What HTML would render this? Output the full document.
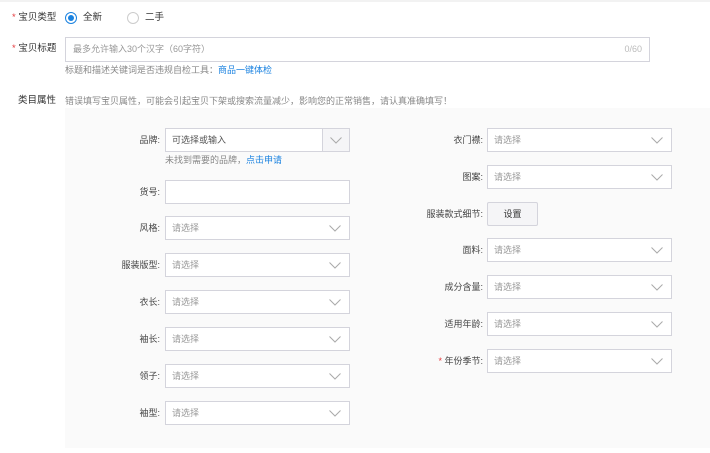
<!DOCTYPE html>
<html><head><meta charset="utf-8"><style>
*{margin:0;padding:0;box-sizing:border-box}
body{width:710px;height:453px;background:#fff;position:relative;overflow:hidden;font-family:"Liberation Sans","Noto Sans CJK SC",sans-serif;font-size:9px;color:#333}
.a{position:absolute;white-space:nowrap}
.lab{position:absolute;white-space:nowrap;text-align:right;font-size:9px;color:#444;line-height:24px}
.box{position:absolute;height:24px;border:1px solid #d4d4dc;background:#fff;color:#999;font-size:9px;line-height:22px;padding-left:6px}
.box svg{position:absolute;right:8px;top:8px}
.red{color:#e4393c}
</style></head><body>
<div class="a" style="left:0;top:0;width:710px;height:2px;background:#f2f2f2"></div>
<div class="a" style="left:12px;top:11px;font-size:9.5px;line-height:14px"><span class="red">* </span>宝贝类型</div>
<div class="a" style="left:65px;top:12px;width:12px;height:12px;border:1px solid #1a82e0;border-radius:50%;background:#fff"><div style="position:absolute;left:2px;top:2px;width:6px;height:6px;border-radius:50%;background:#1a82e0"></div></div>
<div class="a" style="left:83px;top:11px;line-height:14px;font-size:9.5px">全新</div>
<div class="a" style="left:127px;top:12px;width:12px;height:12px;border:1px solid #ccc;border-radius:50%"></div>
<div class="a" style="left:145px;top:11px;line-height:14px;font-size:9.5px">二手</div>
<div class="a" style="left:12px;top:42px;font-size:9.5px;line-height:14px"><span class="red">* </span>宝贝标题</div>
<div class="box" style="left:65px;top:37px;width:585px;height:25px;color:#999;line-height:23px;padding-left:7px">最多允许输入30个汉字（60字符）<span style="position:absolute;right:7px;color:#bbb">0/60</span></div>
<div class="a" style="left:65px;top:64px;color:#888;line-height:12px">标题和描述关键词是否违规自检工具：<span style="color:#1a82e0">商品一键体检</span></div>
<div class="a" style="left:18px;top:94px;font-size:9.5px;line-height:14px">类目属性</div>
<div class="a" style="left:65px;top:95px;color:#888;line-height:12px">错误填写宝贝属性，可能会引起宝贝下架或搜索流量减少，影响您的正常销售，请认真准确填写！</div>
<div class="a" style="left:65px;top:108px;width:645px;height:340px;background:#fafafa"></div>

<div class="lab" style="right:550px;top:128px">品牌:</div>
<div class="box" style="left:165px;top:128px;width:185px;color:#555">可选择或输入<div style="position:absolute;right:0;top:0;width:27px;height:22px;border-left:1px solid #d4d4dc;background:#f5f5f7"><svg width="12" height="7" style="position:absolute;left:7px;top:8px"><path d="M0.5 0.5L6 6L11.5 0.5" fill="none" stroke="#aaa"/></svg></div></div>
<div class="a" style="left:165px;top:154px;color:#888;line-height:12px">未找到需要的品牌，<span style="color:#1a82e0">点击申请</span></div>
<div class="lab" style="right:550px;top:180px">货号:</div>
<div class="box" style="left:165px;top:180px;width:185px"></div>

<div class="lab" style="right:550px;top:216px">风格:</div>
<div class="box" style="left:165px;top:216px;width:185px">请选择<svg width="12" height="7"><path d="M0.5 0.5L6 6L11.5 0.5" fill="none" stroke="#aaa"/></svg></div>
<div class="lab" style="right:550px;top:253px">服装版型:</div>
<div class="box" style="left:165px;top:253px;width:185px">请选择<svg width="12" height="7"><path d="M0.5 0.5L6 6L11.5 0.5" fill="none" stroke="#aaa"/></svg></div>
<div class="lab" style="right:550px;top:290px">衣长:</div>
<div class="box" style="left:165px;top:290px;width:185px">请选择<svg width="12" height="7"><path d="M0.5 0.5L6 6L11.5 0.5" fill="none" stroke="#aaa"/></svg></div>
<div class="lab" style="right:550px;top:327px">袖长:</div>
<div class="box" style="left:165px;top:327px;width:185px">请选择<svg width="12" height="7"><path d="M0.5 0.5L6 6L11.5 0.5" fill="none" stroke="#aaa"/></svg></div>
<div class="lab" style="right:550px;top:364px">领子:</div>
<div class="box" style="left:165px;top:364px;width:185px">请选择<svg width="12" height="7"><path d="M0.5 0.5L6 6L11.5 0.5" fill="none" stroke="#aaa"/></svg></div>
<div class="lab" style="right:550px;top:401px">袖型:</div>
<div class="box" style="left:165px;top:401px;width:185px">请选择<svg width="12" height="7"><path d="M0.5 0.5L6 6L11.5 0.5" fill="none" stroke="#aaa"/></svg></div>

<div class="lab" style="right:227px;top:128px">衣门襟:</div>
<div class="box" style="left:487px;top:128px;width:185px">请选择<svg width="12" height="7"><path d="M0.5 0.5L6 6L11.5 0.5" fill="none" stroke="#aaa"/></svg></div>
<div class="lab" style="right:227px;top:165px">图案:</div>
<div class="box" style="left:487px;top:165px;width:185px">请选择<svg width="12" height="7"><path d="M0.5 0.5L6 6L11.5 0.5" fill="none" stroke="#aaa"/></svg></div>
<div class="lab" style="right:227px;top:202px">服装款式细节:</div>
<div class="a" style="left:487px;top:202px;width:51px;height:24px;border:1px solid #d4d4dc;border-radius:2px;background:#f5f5f7;text-align:center;line-height:22px;color:#333">设置</div>
<div class="lab" style="right:227px;top:238px">面料:</div>
<div class="box" style="left:487px;top:238px;width:185px">请选择<svg width="12" height="7"><path d="M0.5 0.5L6 6L11.5 0.5" fill="none" stroke="#aaa"/></svg></div>
<div class="lab" style="right:227px;top:275px">成分含量:</div>
<div class="box" style="left:487px;top:275px;width:185px">请选择<svg width="12" height="7"><path d="M0.5 0.5L6 6L11.5 0.5" fill="none" stroke="#aaa"/></svg></div>
<div class="lab" style="right:227px;top:312px">适用年龄:</div>
<div class="box" style="left:487px;top:312px;width:185px">请选择<svg width="12" height="7"><path d="M0.5 0.5L6 6L11.5 0.5" fill="none" stroke="#aaa"/></svg></div>
<div class="lab" style="right:227px;top:349px"><span class="red">* </span>年份季节:</div>
<div class="box" style="left:487px;top:349px;width:185px">请选择<svg width="12" height="7"><path d="M0.5 0.5L6 6L11.5 0.5" fill="none" stroke="#aaa"/></svg></div>
</body></html>
